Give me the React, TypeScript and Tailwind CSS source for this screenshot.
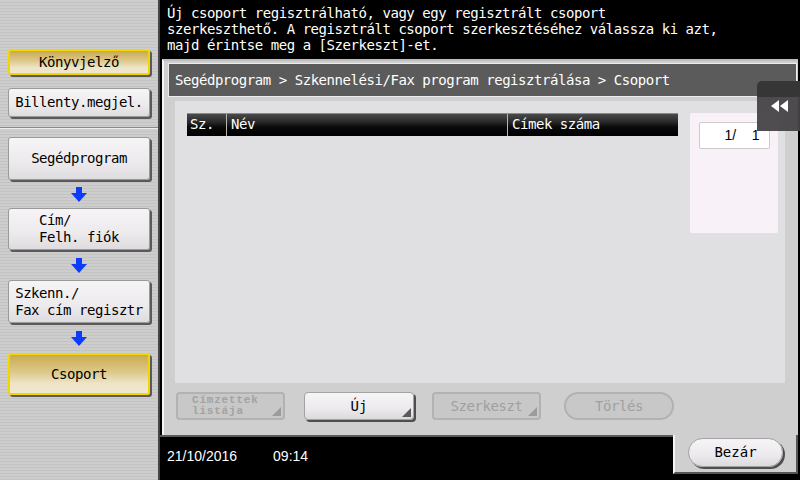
import type { ReactNode } from "react";

const mono = "font-['DejaVu_Sans_Mono','Liberation_Mono',monospace]";

function DownArrow() {
  return (
    <svg width="16" height="15" viewBox="0 0 16 15">
      <polygon points="5,0 11,0 11,6 16,6 8,15 0,6 5,6" fill="#0a3cff" />
    </svg>
  );
}

function NavButton({ children, active, h }: { children: ReactNode; active?: boolean; h: string }) {
  const base = active
    ? "border-2 border-[#f2d600] bg-[linear-gradient(180deg,#c9aa52_0%,#dcc98a_45%,#eee4c6_75%,#efe7cf_100%)]"
    : "border border-[#9a9a9a] bg-[linear-gradient(180deg,#f6f4f6_0%,#eceaec_60%,#dedcde_100%)]";
  return (
    <div
      className={`${base} ${h} mx-[8px] rounded-[3px] shadow-[2px_2px_0_#5a5a5a] flex items-center justify-center text-black text-[14px] leading-[17px] tracking-[-0.45px] ${mono}`}
    >
      {children}
    </div>
  );
}

function Corner({ color }: { color: string }) {
  return (
    <svg className="absolute right-[2px] bottom-[2px]" width="9" height="9" viewBox="0 0 9 9">
      <polygon points="9,0 9,9 0,9" fill={color} />
    </svg>
  );
}

export default function App() {
  return (
    <div className="w-[800px] h-[480px] bg-black flex relative overflow-hidden">
      {/* left navigation */}
      <aside className="w-[160px] h-full border-r-2 border-[#444] bg-[repeating-linear-gradient(180deg,#cdcdcd_0px,#cdcdcd_2px,#c3c3c3_2px,#c3c3c3_3px)] flex flex-col pt-[49px]">
        <NavButton active h="h-[26px]">Könyvjelző</NavButton>
        <div className="mt-[13px]">
          <NavButton h="h-[29px]">Billenty.megjel.</NavButton>
        </div>
        <div className="mt-[10px] border-t border-[#8a8a8a] border-b border-b-[#eeeeee] h-[2px]" />
        <div className="mt-[8px]">
          <NavButton h="h-[43px]">Segédprogram</NavButton>
        </div>
        <div className="h-[28px] flex items-center justify-center"><DownArrow /></div>
        <NavButton h="h-[42px]">
          <span className="text-left">Cím/<br />Felh. fiók</span>
        </NavButton>
        <div className="h-[30px] flex items-center justify-center"><DownArrow /></div>
        <NavButton h="h-[43px]">
          <span className="text-left">Szkenn./<br />Fax cím regisztr</span>
        </NavButton>
        <div className="h-[30px] flex items-center justify-center"><DownArrow /></div>
        <NavButton active h="h-[42px]">Csoport</NavButton>
      </aside>

      {/* right side */}
      <main className="w-[640px] h-full flex flex-col">
        <div className={`h-[59px] px-[7px] pt-[5px] text-white text-[14px] leading-[16px] tracking-[-0.45px] ${mono}`}>
          <p>Új csoport regisztrálható, vagy egy regisztrált csoport</p>
          <p>szerkeszthető. A regisztrált csoport szerkesztéséhez válassza ki azt,</p>
          <p>majd érintse meg a [Szerkeszt]-et.</p>
        </div>

        <section className="ml-[2px] mr-[2px] h-[376px] bg-[#cfcfcf] border-l-2 border-l-[#f4f4f4] border-t-2 border-t-[#bdbdbd] flex flex-col">
          <div className={`mt-[2px] ml-[4px] mr-[1px] h-[34px] bg-[#5b5b5b] border border-[#ececec] flex items-center pl-[6px] text-white text-[14px] tracking-[-0.45px] ${mono}`}>
            Segédprogram &gt; Szkennelési/Fax program regisztrálása &gt; Csoport
          </div>

          <div className="mt-[4px] ml-[11px] mr-[13px] h-[282px] bg-[#e0dfe1] flex justify-between pl-[12px] pr-[7px] pt-[12px]">
            <div className={`w-[491px] h-[23px] border-t border-[#8c8c8c] bg-[linear-gradient(180deg,#4a4a4a_0%,#2a2a2a_35%,#0a0a0a_60%,#000_100%)] flex text-white text-[14px] tracking-[-0.45px] whitespace-nowrap ${mono}`}>
              <div className="w-[40px] pl-[3px] border-r border-[#b4b4b4] leading-[21px]">Sz.</div>
              <div className="w-[281px] pl-[4px] border-r border-[#b4b4b4] leading-[21px]">Név</div>
              <div className="flex-1 pl-[4px] leading-[21px]">Címek száma</div>
            </div>
            <div className="w-[88px] h-[120px] bg-[#f8f2f8] rounded-[2px] pt-[9px] flex justify-center">
              <div className="w-[71px] h-[27px] bg-white border border-[#cccccc] rounded-[2px] flex items-center justify-end pr-[9px] text-black text-[14px] font-['Liberation_Sans',Arial,sans-serif] whitespace-pre">
                1/    1
              </div>
            </div>
          </div>

          <div className="mt-[9px] ml-[12px] flex items-center">
            <div className="relative w-[109px] h-[28px] rounded-[4px] border-2 border-[#b2b2b2] bg-[#c8c8c8] flex flex-col items-start justify-center pl-[14px] text-[#a2a2a2] text-[11px] leading-[11px] tracking-[0.8px] font-['Liberation_Mono',monospace] font-bold">
              <span>Címzettek</span>
              <span>listája</span>
              <Corner color="#9c9c9c" />
            </div>
            <div className={`relative ml-[19px] w-[110px] h-[28px] rounded-[4px] border border-[#a2a2a2] bg-[linear-gradient(180deg,#f6f4f6_0%,#eceaec_60%,#dcdadc_100%)] shadow-[2px_2px_0_#4e4e4e] flex items-center justify-center text-black text-[14px] ${mono}`}>
              Új
              <Corner color="#5a5a5a" />
            </div>
            <div className={`relative ml-[18px] w-[109px] h-[28px] rounded-[4px] border-2 border-[#b2b2b2] bg-[#c8c8c8] flex items-center justify-center text-[#a0a0a0] text-[14px] tracking-[-0.45px] ${mono}`}>
              Szerkeszt
              <Corner color="#9c9c9c" />
            </div>
            <div className={`ml-[23px] w-[110px] h-[28px] rounded-full border-2 border-[#b2b2b2] bg-[#c8c8c8] flex items-center justify-center text-[#a0a0a0] text-[14px] tracking-[-0.45px] ${mono}`}>
              Törlés
            </div>
          </div>
        </section>

        <div className="flex-1 flex">
          <div className="flex-1 border-t-2 border-[#5a5a5a] flex items-center pl-[7px] pb-[5px] text-white text-[14px] font-['Liberation_Sans',Arial,sans-serif]">
            <span>21/10/2016</span>
            <span className="ml-[36px]">09:14</span>
          </div>
          <div className="w-[125px] h-[39px] mr-[2px] bg-[#cfcfcf] border-l-2 border-l-[#f4f4f4] border-b-2 border-b-[#555] border-r-2 border-r-[#555] flex items-center justify-center pb-[2px]">
            <div className={`w-[95px] h-[29px] rounded-full border border-[#a2a2a2] bg-[linear-gradient(180deg,#f6f4f6_0%,#eceaec_60%,#dcdadc_100%)] shadow-[2px_2px_0_#4e4e4e] flex items-center justify-center text-black text-[14px] ${mono}`}>
              Bezár
            </div>
          </div>
        </div>
      </main>

      {/* collapse tab */}
      <div className="absolute left-[757px] top-[81px] w-[43px] h-[50px] rounded-tl-[5px] overflow-hidden flex flex-col">
        <div className="h-[16px] bg-[#363636]" />
        <div className="flex-1 bg-[#474347]/95 flex items-start justify-center pt-[3px] pl-[3px]">
          <svg width="18" height="12" viewBox="0 0 18 12">
            <polygon points="0,6 8,0 8,12" fill="#ffffff" />
            <polygon points="9,6 17,0 17,12" fill="#ffffff" />
          </svg>
        </div>
      </div>
    </div>
  );
}
